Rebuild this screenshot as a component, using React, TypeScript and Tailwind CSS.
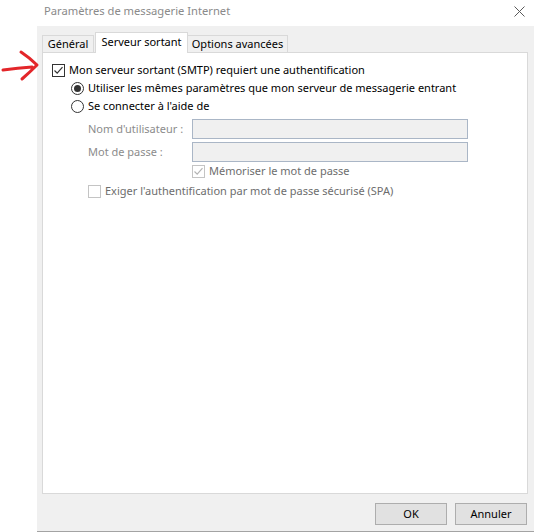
import React from "react";

const font = { fontFamily: '"Noto Sans", "Open Sans", Arial, sans-serif' };

function CheckBox({ checked, disabled }: { checked?: boolean; disabled?: boolean }) {
  return (
    <span
      className={`flex h-[13px] w-[13px] shrink-0 items-center justify-center border bg-white ${
        disabled ? "border-[#c4c4c4]" : "border-[#333333]"
      }`}
    >
      {checked && (
        <svg width="11" height="11" viewBox="0 0 11 11">
          <path
            d="M1.5 5.5 L4.2 8.2 L9.5 2.2"
            fill="none"
            stroke={disabled ? "#b4b4b4" : "#333333"}
            strokeWidth="1.2"
          />
        </svg>
      )}
    </span>
  );
}

function Radio({ checked }: { checked?: boolean }) {
  return (
    <span className="flex h-[13px] w-[13px] shrink-0 items-center justify-center rounded-full border border-[#333333] bg-white">
      {checked && <span className="h-[7px] w-[7px] rounded-full bg-[#333333]" />}
    </span>
  );
}

export default function App() {
  return (
    <div className="relative h-[532px] w-[534px] overflow-hidden bg-white text-[11px] text-black" style={font}>
      {/* window title bar */}
      <div className="flex h-[26px] items-center justify-between pl-[44px] pr-[8px]">
        <span className="mt-[-3px] text-[12px] text-[#8a8a8a]" style={{ fontSize: "11.2px" }}>
          Paramètres de messagerie Internet
        </span>
        <svg width="11" height="11" viewBox="0 0 11 11" className="mr-[1px] mt-[-4px]">
          <path d="M0.5 0.5 L10.5 10.5 M10.5 0.5 L0.5 10.5" stroke="#5a5a5a" strokeWidth="1" />
        </svg>
      </div>

      <div className="flex h-[506px]">
        <div className="w-[37px] shrink-0" />
        <div className="flex flex-1 flex-col border-b border-[#a3a3a3] bg-[#f0f0f0] pl-[5px] pr-[6px]">
          {/* tab strip */}
          <div className="flex h-[26px] items-end">
            <div className="flex h-[17px] w-[52px] items-center justify-center border border-b-0 border-[#d9d9d9] pt-[1px]">
              Général
            </div>
            <div className="relative z-10 mb-[-1px] ml-[1px] flex h-[21px] w-[93px] items-center justify-center border border-b-0 border-[#d9d9d9] bg-white pb-[2px]">
              Serveur sortant
            </div>
            <div className="flex h-[17px] w-[100px] items-center justify-center border border-b-0 border-l-0 border-[#d9d9d9] pt-[1px]">
              Options avancées
            </div>
          </div>

          {/* tab page */}
          <div className="flex h-[442px] flex-col border border-[#d9d9d9] bg-white pl-[9px]">
            <div className="mt-[8px] flex h-[18px] items-center gap-[4px]">
              <CheckBox checked />
              <span>Mon serveur sortant (SMTP) requiert une authentification</span>
            </div>
            <div className="flex h-[18px] items-center gap-[4px] pl-[19px]">
              <Radio checked />
              <span>Utiliser les mêmes paramètres que mon serveur de messagerie entrant</span>
            </div>
            <div className="flex h-[19px] items-center gap-[4px] pl-[19px]">
              <Radio />
              <span>Se connecter à l'aide de</span>
            </div>

            <div className="mt-[3px] flex h-[20px] items-center pl-[36px]">
              <span className="w-[104px] shrink-0 text-[#8c8c8c]">Nom d'utilisateur :</span>
              <div className="h-[20px] w-[276px] border border-[#aab6c6] bg-[#f0f0f0]" />
            </div>
            <div className="mt-[3px] flex h-[20px] items-center pl-[36px]">
              <span className="w-[104px] shrink-0 text-[#8c8c8c]">Mot de passe :</span>
              <div className="h-[20px] w-[276px] border border-[#aab6c6] bg-[#f0f0f0]" />
            </div>

            <div className="flex h-[18px] items-center gap-[4px] pl-[140px]">
              <CheckBox checked disabled />
              <span className="text-[#6d6d6d]">Mémoriser le mot de passe</span>
            </div>
            <div className="mt-[2px] flex h-[18px] items-center gap-[4px] pl-[36px]">
              <CheckBox disabled />
              <span className="text-[#6d6d6d]">Exiger l'authentification par mot de passe sécurisé (SPA)</span>
            </div>
          </div>

          {/* dialog buttons */}
          <div className="mt-[9px] flex justify-end gap-[8px] pr-[1px]">
            <button className="h-[22px] w-[72px] border border-[#adadad] bg-[#e1e1e1] text-[11px]">OK</button>
            <button className="h-[22px] w-[72px] border border-[#adadad] bg-[#e1e1e1] text-[11px]">Annuler</button>
          </div>
        </div>
      </div>

      {/* hand-drawn red arrow */}
      <svg className="absolute left-0 top-[48px]" width="42" height="36" viewBox="0 0 42 36">
        <path
          d="M21 4 Q30 10 37 17 Q30 24 22 31 M3 22 Q18 20 32 19"
          fill="none"
          stroke="#e3262a"
          strokeWidth="3"
          strokeLinecap="round"
          strokeLinejoin="round"
        />
      </svg>
    </div>
  );
}
